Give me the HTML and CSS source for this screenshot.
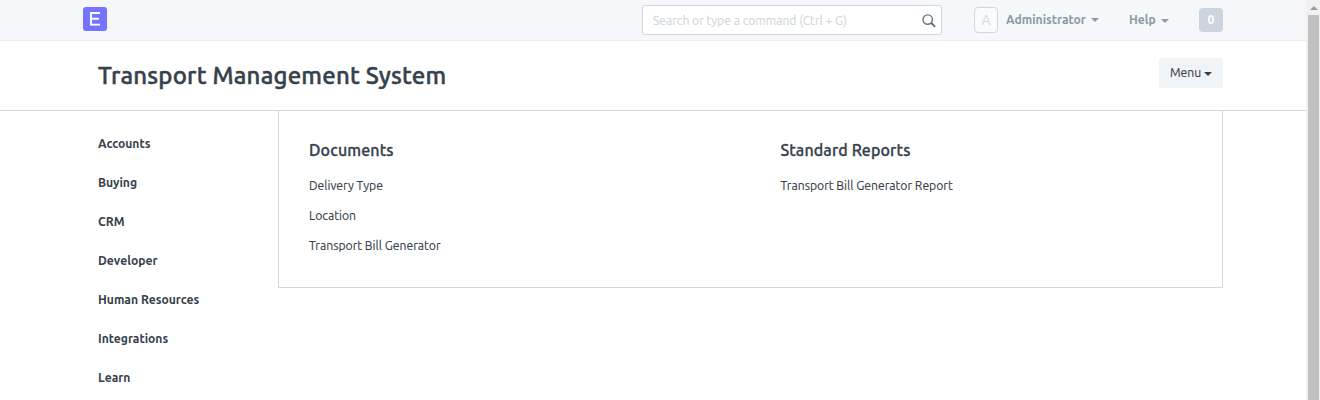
FILE: index.html
```html
<!DOCTYPE html>
<html lang="en">
<head>
<meta charset="utf-8">
<title>Transport Management System</title>
<link rel="stylesheet" href="styles.css">
</head>
<body>
<div class="page">
  <header class="navbar">
    <a class="logo"><svg width="24" height="24" viewBox="0 0 24 24"><rect width="24" height="24" rx="3" fill="#7574ff"/><path d="M17 6H8V17.6H17M8 11.7H15.8" fill="none" stroke="#fff" stroke-width="1.9"/></svg></a>
    <div class="search">
      <span class="placeholder">Search or type a command (Ctrl + G)</span>
      <svg class="lens" width="14" height="14" viewBox="0 0 14 14" fill="none" stroke="#65727f"><circle cx="5.7" cy="5.6" r="4.7" stroke-width="1.4"/><path d="M9.2 9.1L13.1 12.8" stroke-width="2"/></svg>
    </div>
    <div class="user"><span class="avatar">A</span><span class="nav-text">Administrator</span><i class="caret"></i></div>
    <div class="help"><span class="nav-text">Help</span><i class="caret"></i></div>
    <span class="badge">0</span>
  </header>
  <section class="page-head">
    <h1>Transport Management System</h1>
    <button class="menu"><span>Menu</span><i class="caret"></i></button>
  </section>
  <main class="content">
    <nav class="sidebar">
      <a>Accounts</a>
      <a>Buying</a>
      <a>CRM</a>
      <a>Developer</a>
      <a>Human Resources</a>
      <a>Integrations</a>
      <a>Learn</a>
    </nav>
    <div class="modules">
      <section class="col">
        <h2>Documents</h2>
        <a>Delivery Type</a>
        <a>Location</a>
        <a>Transport Bill Generator</a>
      </section>
      <section class="col">
        <h2>Standard Reports</h2>
        <a>Transport Bill Generator Report</a>
      </section>
    </div>
  </main>
</div>
<div class="scrollbar"><i class="arrow"></i><div class="thumb"></div></div>
</body>
</html>
```
FILE: styles.css
```css
* { box-sizing: border-box; }
body {
  margin: 0;
  height: 400px;
  display: flex;
  overflow: hidden;
  background: #fff;
  color: #36414c;
  font: 12.18px/18px Ubuntu, "Noto Sans", sans-serif;
}
.page { width: 1306px; }
a, span, h1, h2 { white-space: nowrap; }
.navbar {
  display: flex;
  height: 41px;
  padding: 7px 83px 0;
  background: #f5f7fa;
  border-bottom: 1px solid #ebeef0;
}
.logo { width: 24px; height: 24px; }
.logo svg { display: block; }
.search {
  display: flex;
  justify-content: space-between;
  width: 300px;
  height: 30px;
  margin: -2px 0 0 535px;
  padding: 6px 5px 0 10px;
  background: #fff;
  border: 1px solid #d1d8dd;
  border-radius: 3px;
}
.placeholder { color: #d1d8dd; font-size: 12.1px; -webkit-text-stroke: 0.15px currentColor; }
.lens { margin-top: 2px; }
.user { display: flex; width: 155px; margin-left: 32px; }
.avatar {
  width: 24px;
  height: 26px;
  margin-right: 8px;
  border: 1px solid #d1d8dd;
  border-radius: 4px;
  background: #fafbfc;
  color: #d1d8dd;
  font: 14px/24px Ubuntu, "Noto Sans", sans-serif;
  text-align: center;
}
.nav-text { margin-top: 4px; color: #8d99a6; font-size: 12.15px; font-weight: 700; }
.caret {
  width: 0;
  height: 0;
  border: 4px solid transparent;
  border-top-color: currentColor;
  border-bottom: 0;
}
.navbar .caret { margin: 11px 0 0 5px; color: #8d99a6; }
.help { display: flex; width: 70px; }
.navbar .help .caret { margin: 12px 0 0 5px; }
.badge {
  width: 24px;
  height: 24px;
  margin-top: 1px;
  border-radius: 4px;
  background: #cdd4dc;
  color: #fff;
  font-weight: 700;
  line-height: 24px;
  text-align: center;
}
.page-head {
  display: flex;
  justify-content: space-between;
  height: 70px;
  padding: 17px 83px 0 98px;
  border-bottom: 1px solid #d1d8dd;
}
h1 {
  margin: 0;
  font-size: 24px;
  line-height: 36px;
  font-weight: 500;
  letter-spacing: 0.19px;
  -webkit-text-stroke: 0.45px currentColor;
}
.menu {
  display: flex;
  width: 64px;
  height: 30px;
  padding: 6px 0 0 11px;
  border: 0;
  border-radius: 3px;
  background: #f0f4f7;
  color: #36414c;
  font: inherit;
  -webkit-text-stroke: 0.15px currentColor;
}
.menu .caret { margin: 8px 0 0 3px; }
.content { display: flex; padding: 0 83px 0 98px; }
.sidebar { width: 180px; padding-top: 24px; }
.sidebar a { display: block; height: 39px; font-size: 12.15px; font-weight: 700; }
.modules {
  display: flex;
  width: 945px;
  height: 177px;
  padding: 27px 0 0 30px;
  border: 1px solid #d1d8dd;
  border-top: 0;
}
.col { flex: 0 0 471.5px; }
h2 {
  margin: 0 0 14px;
  font-size: 16px;
  line-height: 24px;
  font-weight: 500;
  letter-spacing: 0.12px;
  -webkit-text-stroke: 0.3px currentColor;
}
.col a { display: block; height: 30px; line-height: 20px; -webkit-text-stroke: 0.12px currentColor; }
.scrollbar { width: 14px; padding: 6px 1px 0 2px; background: #f1f1f1; }
.arrow {
  display: block;
  width: 0;
  margin: 0 0 5px 2px;
  border: 4px solid transparent;
  border-top: 0;
  border-bottom-color: #9b9b9b;
}
.thumb { height: 385px; background: #c1c1c1; }
```
